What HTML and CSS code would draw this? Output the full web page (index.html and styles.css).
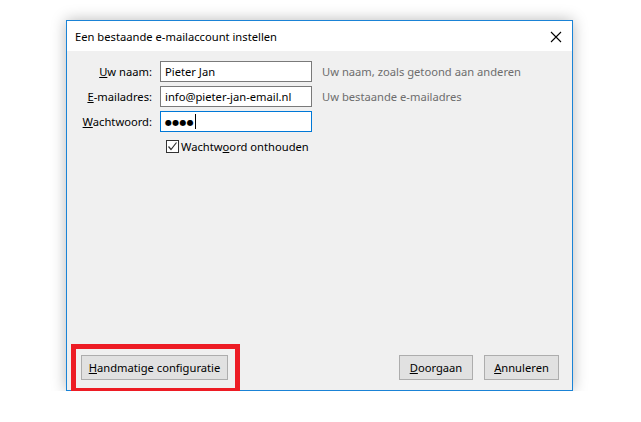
FILE: index.html
```html
<!DOCTYPE html>
<html lang="nl">
<head>
<meta charset="utf-8">
<title>Een bestaande e-mailaccount instellen</title>
<link rel="stylesheet" href="styles.css">
</head>
<body>
<div class="dialog">
  <div class="titlebar">
    <span class="title">Een bestaande e-mailaccount instellen</span>
    <svg class="close" width="12" height="12" viewBox="0 0 12 12"><path d="M1 1 L11 11 M11 1 L1 11" stroke="#000" stroke-width="1.1" fill="none"/></svg>
  </div>
  <div class="body">
    <div class="form">
      <label class="lbl"><u>U</u>w naam:</label>
      <div class="input">Pieter Jan</div>
      <span class="hint">Uw naam, zoals getoond aan anderen</span>

      <label class="lbl"><u>E</u>-mailadres:</label>
      <div class="input">info@pieter-jan-email.nl</div>
      <span class="hint">Uw bestaande e-mailadres</span>

      <label class="lbl"><u>W</u>achtwoord:</label>
      <div class="input focused"><span class="dots">&#9679;&#9679;&#9679;&#9679;</span><span class="caret"></span></div>
      <span class="hint"></span>

      <span></span>
      <label class="check">
        <span class="box"><svg width="11" height="11" viewBox="0 0 11 11"><path d="M1.5 5.5 L4 8.5 L9.5 1.5" stroke="#333" stroke-width="1.2" fill="none"/></svg></span>
        <span class="check-text">Wachtw<u>o</u>ord onthouden</span>
      </label>
    </div>
    <div class="footer">
      <div class="marked">
        <button class="btn wide"><u>H</u>andmatige configuratie</button>
        <span class="highlight"></span>
      </div>
      <div class="actions">
        <button class="btn"><u>D</u>oorgaan</button>
        <button class="btn"><u>A</u>nnuleren</button>
      </div>
    </div>
  </div>
</div>
</body>
</html>
```

FILE: styles.css
```css
html, body {
  margin: 0;
  padding: 0;
  background: #fff;
}

body {
  font-family: "Noto Sans", "DejaVu Sans", sans-serif;
  font-size: 11.2px;
  color: #000;
  padding: 20px 0 0 66px;
}

.dialog {
  width: 505px;
  height: 369px;
  border: 1px solid #1a83d6;
  background: #f0f0f0;
  display: flex;
  flex-direction: column;
  box-shadow: 0 0 14px rgba(0, 0, 0, 0.28);
}

.titlebar {
  height: 30px;
  background: #fff;
  display: flex;
  align-items: center;
  justify-content: space-between;
  padding: 0 10px 0 8px;
}

.title {
  line-height: 16px;
  padding-top: 1px;
}

.close {
  display: block;
  margin-top: 1px;
}

.body {
  flex: 1;
  display: flex;
  flex-direction: column;
  justify-content: space-between;
  padding: 10px 13px 10px 14px;
}

.form {
  display: grid;
  grid-template-columns: 71px 152px auto;
  column-gap: 8px;
  row-gap: 4px;
  align-items: center;
}

.lbl {
  text-align: right;
  line-height: 16px;
  padding-top: 1px;
  white-space: nowrap;
}

.input {
  height: 19px;
  border: 1px solid #7a7a7a;
  background: #fff;
  padding: 0 4px;
  display: flex;
  align-items: center;
  line-height: 16px;
  white-space: nowrap;
  overflow: hidden;
}

.input.focused {
  border-color: #0078d7;
}

.dots {
  font-size: 8px;
  letter-spacing: 0.3px;
  line-height: 16px;
}

.caret {
  display: inline-block;
  width: 1px;
  height: 15px;
  background: #000;
  margin-left: 1px;
}

.hint {
  color: #6d6d6d;
  padding-left: 2px;
  line-height: 16px;
  padding-top: 1px;
  white-space: nowrap;
}

.check {
  grid-column: 2 / 4;
  display: flex;
  align-items: center;
  gap: 2px;
  margin-top: 3px;
  margin-left: 6px;
}

.box {
  width: 11px;
  height: 11px;
  border: 1px solid #333;
  background: #fff;
  display: flex;
}

.check-text {
  white-space: nowrap;
}

.footer {
  display: flex;
  justify-content: space-between;
  align-items: flex-end;
}

.marked {
  position: relative;
}

.highlight {
  position: absolute;
  left: -10px;
  top: -11px;
  right: -12px;
  bottom: -13px;
  border: 5px solid #ed1c24;
  pointer-events: none;
}

.actions {
  display: flex;
  gap: 11px;
}

.btn {
  font-family: inherit;
  font-size: 11.2px;
  color: #000;
  height: 25px;
  padding: 0 6px;
  background: #e1e1e1;
  border: 1px solid #adadad;
  line-height: 16px;
  white-space: nowrap;
}

.btn.wide {
  width: 147px;
}

.actions .btn:first-child {
  width: 74px;
}

.actions .btn:last-child {
  width: 75px;
}
```
